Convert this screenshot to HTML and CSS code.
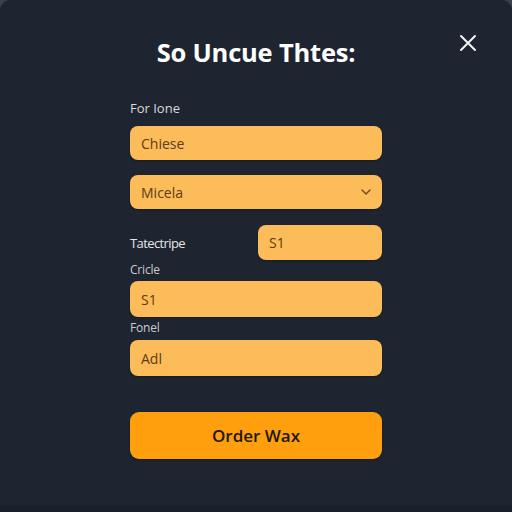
FILE: index.html
```html
<!DOCTYPE html>
<html lang="en">
<head>
<meta charset="utf-8">
<title>Order</title>
<link rel="stylesheet" href="styles.css">
</head>
<body>
<div class="dialog">
  <button class="close" aria-label="Close">
    <svg width="18" height="18" viewBox="0 0 18 18"><path d="M2 2 L16 16 M16 2 L2 16" stroke="#f2f2f2" stroke-width="2" stroke-linecap="round"/></svg>
  </button>
  <h1 class="title">So Uncue Thtes:</h1>
  <form class="form">
    <label class="label first">For Ione</label>
    <div class="field">Chiese</div>
    <div class="field select">
      <span>Micela</span>
      <svg width="10" height="6" viewBox="0 0 10 6"><path d="M1 1 L5 5 L9 1" fill="none" stroke="#6b4a1c" stroke-width="1.4" stroke-linecap="round" stroke-linejoin="round"/></svg>
    </div>
    <div class="row">
      <label class="label inline">Tatectripe</label>
      <div class="field short">S1</div>
    </div>
    <label class="label small">Cricle</label>
    <div class="field tall">S1</div>
    <label class="label small spaced">Fonel</label>
    <div class="field tall">Adl</div>
    <button type="button" class="submit">Order Wax</button>
  </form>
</div>
</body>
</html>
```
FILE: styles.css
```css
html, body {
  margin: 0;
  padding: 0;
  background: #3b414b;
}
.dialog {
  position: relative;
  width: 512px;
  height: 512px;
  box-sizing: border-box;
  background: #1e2530;
  border-radius: 10px 10px 0 0;
  padding-top: 36px;
  font-family: "Open Sans", "Noto Sans", sans-serif;
  border-bottom: 6px solid #1a202a;
}
.close {
  position: absolute;
  top: 34px;
  left: 459px;
  width: 18px;
  height: 18px;
  padding: 0;
  border: 0;
  background: none;
  display: flex;
}
.title {
  margin: 0;
  text-align: center;
  color: #ffffff;
  font-size: 25.5px;
  line-height: 32px;
  font-weight: 700;
  letter-spacing: -0.2px;
}
.form {
  width: 252px;
  margin: 0 0 0 130px;
  display: flex;
  flex-direction: column;
}
.label {
  color: #d9dadc;
  font-size: 13px;
  line-height: 18px;
}
.label.first {
  margin-top: 31px;
  margin-bottom: 9px;
}
.label.small {
  color: #c9cbce;
  font-size: 12px;
  margin-top: 1px;
  margin-bottom: 2px;
  letter-spacing: -0.2px;
}
.label.small.spaced {
  margin-top: 2px;
  margin-bottom: 3px;
}
.field {
  height: 34px;
  box-sizing: border-box;
  border-radius: 8px;
  background: #fcbc59;
  color: #5b3d14;
  font-size: 14px;
  padding: 0 11px;
  display: flex;
  align-items: center;
  box-shadow: 0 1px 2px rgba(0,0,0,0.3);
}
.field.tall {
  height: 36px;
}
.select {
  margin-top: 15px;
  justify-content: space-between;
  padding-right: 11px;
}
.row {
  margin-top: 16px;
  display: flex;
  align-items: center;
  justify-content: space-between;
}
.label.inline {
  color: #e4e5e7;
  font-size: 13px;
  letter-spacing: -0.6px;
}
.short {
  width: 124px;
  height: 35px;
}
.submit {
  margin-top: 36px;
  height: 47px;
  border: 0;
  border-radius: 9px;
  background: #ff9f0d;
  color: #1c1710;
  font-family: "Open Sans", "Noto Sans", sans-serif;
  font-size: 17px;
  font-weight: 600;
  box-shadow: 0 1px 2px rgba(0,0,0,0.35);
}
```
